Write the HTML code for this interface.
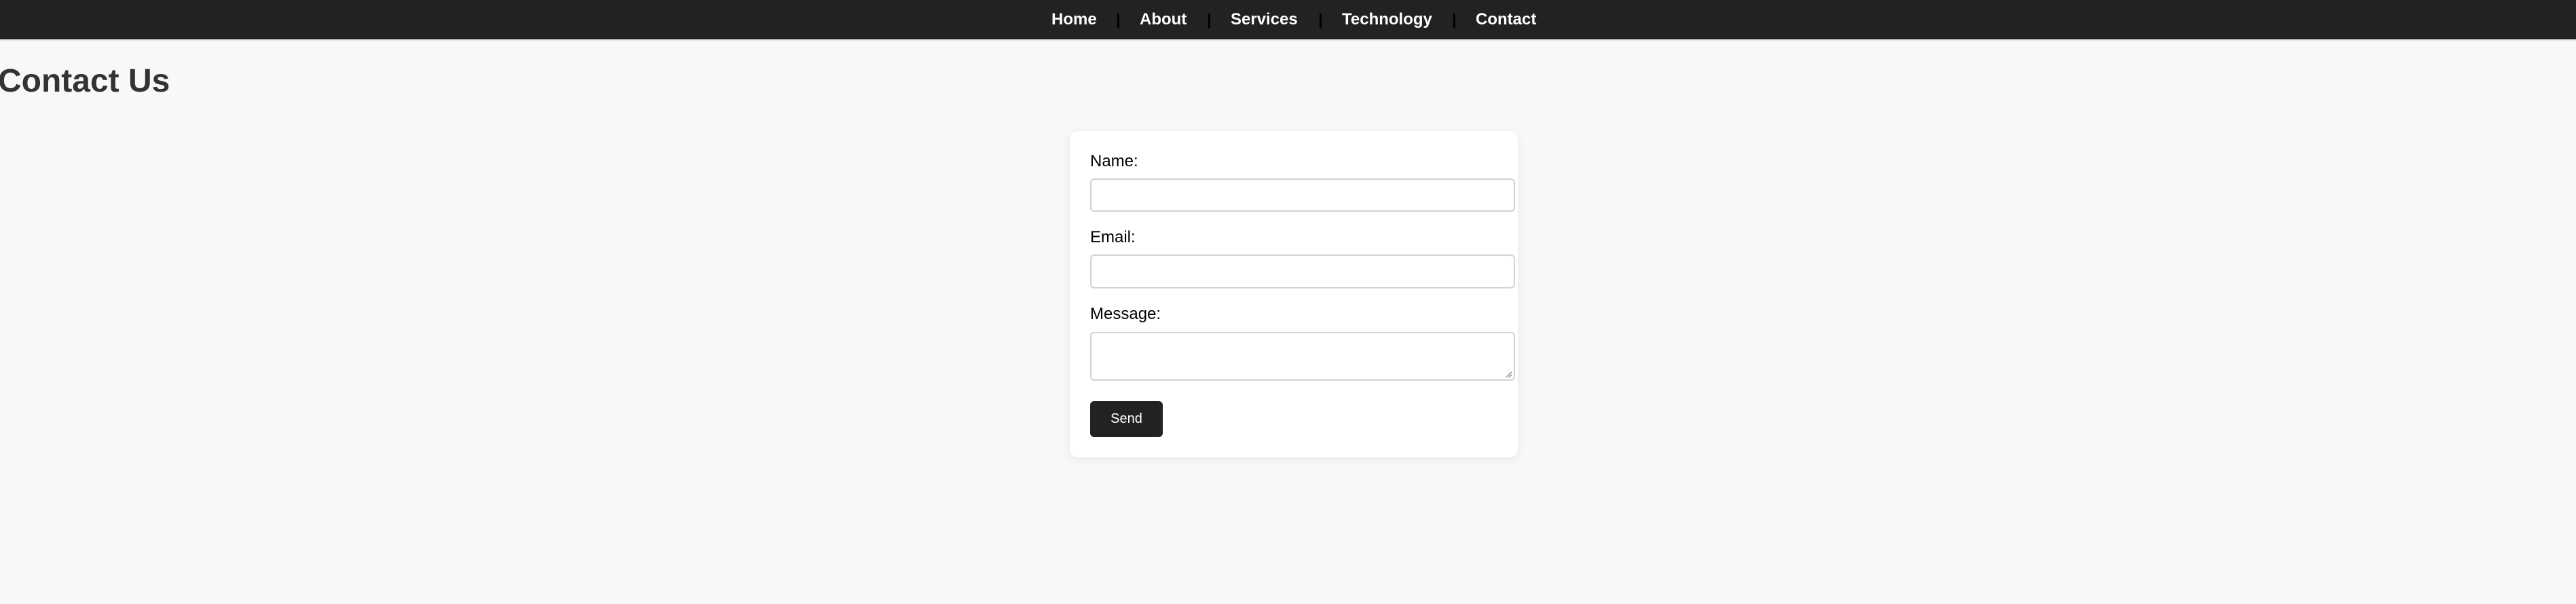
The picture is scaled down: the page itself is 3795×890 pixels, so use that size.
<!DOCTYPE html>
<html><head><meta charset="utf-8"><style>
*{box-sizing:border-box;margin:0;padding:0}
html,body{width:3795px;height:890px;overflow:hidden;background:#f7f8fa;font-family:"Liberation Sans",Arial,sans-serif}
.nav{position:absolute;left:0;top:0;width:3795px;height:61px;background:#222;border-bottom:3px solid #e9eaec}
.nav span{position:absolute;top:14px;font-size:24px;font-weight:bold;color:#fff;line-height:30px;white-space:nowrap}
.sep{position:absolute;top:20px;width:3px;height:22px;background:#000}
h1{position:absolute;left:-3px;top:92px;font-size:48px;font-weight:bold;color:#333;line-height:56px}
.card{position:absolute;left:1576px;top:193px;width:660px;height:481px;background:#fff;border-radius:12px;box-shadow:0 3px 12px rgba(0,0,0,0.08)}
.lbl{position:absolute;left:1606px;font-size:24px;color:#000;line-height:28px}
.inp{position:absolute;left:1606px;width:626px;border:2px solid #d2d2d2;border-radius:6px;background:#fff}
.btn{position:absolute;left:1606px;top:591px;width:107px;height:53px;background:#222;border-radius:6px;color:#fff;font-size:20px;line-height:53px;text-align:center}
</style></head><body>
<div class="nav">
<span style="left:1549px">Home</span>
<div class="sep" style="left:1646px"></div>
<span style="left:1679px">About</span>
<div class="sep" style="left:1780px"></div>
<span style="left:1813px">Services</span>
<div class="sep" style="left:1944px"></div>
<span style="left:1977px">Technology</span>
<div class="sep" style="left:2141px"></div>
<span style="left:2174px">Contact</span>
</div>
<h1>Contact Us</h1>
<div class="card"></div>
<div class="lbl" style="top:224px">Name:</div>
<div class="inp" style="top:263px;height:49px"></div>
<div class="lbl" style="top:336px">Email:</div>
<div class="inp" style="top:375px;height:50px"></div>
<div class="lbl" style="top:449px">Message:</div>
<div class="inp" style="top:489px;height:72px">
<svg style="position:absolute;right:2px;bottom:2px" width="10" height="10" viewBox="0 0 10 10"><path d="M1 9L9 1M5 9L9 5" stroke="#666" stroke-width="1.2"/></svg>
</div>
<div class="btn">Send</div>
</body></html>
